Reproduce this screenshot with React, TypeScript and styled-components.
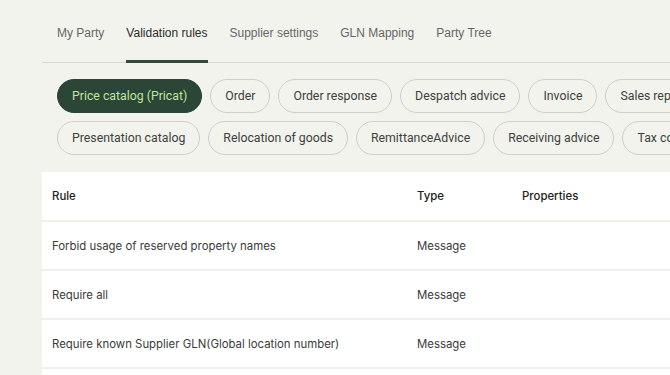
import styled, { createGlobalStyle } from "styled-components";

const GlobalStyle = createGlobalStyle`
  html, body {
    margin: 0;
    padding: 0;
    background: #f3f3ee;
    overflow: hidden;
  }
  body {
    font-family: Inter, "Liberation Sans", sans-serif;
    color: #333;
  }
`;

const Page = styled.div`
  width: 670px;
  height: 375px;
  padding-left: 42px;
  box-sizing: border-box;
  overflow: hidden;
`;

const TabBar = styled.nav`
  display: flex;
  gap: 22px;
  padding: 24px 0 0 15px;
  border-bottom: 1px solid #d9d9d4;
`;

const Tab = styled.a<{ $active?: boolean }>`
  font-family: "Liberation Sans", Arial, sans-serif;
  font-size: 12px;
  line-height: 18px;
  padding-bottom: 18px;
  margin-bottom: -1px;
  color: ${p => (p.$active ? "#2b2b2b" : "#666")};
  border-bottom: 3px solid ${p => (p.$active ? "#2f4a3b" : "transparent")};
  white-space: nowrap;
  cursor: pointer;
`;

const ChipArea = styled.div`
  display: flex;
  flex-direction: column;
  gap: 8px;
  padding: 16px 0 0 15px;
`;

const ChipRow = styled.div`
  display: flex;
  gap: 8px;
  flex-wrap: nowrap;
`;

const Chip = styled.button<{ $active?: boolean }>`
  flex: none;
  font-family: Roboto, "Liberation Sans", sans-serif;
  font-size: 12.3px;
  line-height: 18px;
  padding: 7px 14px;
  border-radius: 17px;
  border: 1px solid ${p => (p.$active ? "#2b4536" : "#cfcfca")};
  background: ${p => (p.$active ? "#2b4536" : "transparent")};
  color: ${p => (p.$active ? "#bfe69c" : "#3c413d")};
  white-space: nowrap;
  cursor: pointer;
`;

const Card = styled.div`
  margin-top: 17px;
  width: 720px;
  background: #fff;
`;

const Row = styled.div<{ $head?: boolean }>`
  display: grid;
  grid-template-columns: 365px 105px 1fr;
  align-items: center;
  padding-left: 10px;
  height: ${p => (p.$head ? "48px" : "47px")};
  border-top: ${p => (p.$head ? "none" : "2px solid #f0f0eb")};
  font-size: 11.4px;
  font-weight: ${p => (p.$head ? 500 : 400)};
  color: ${p => (p.$head ? "#222" : "#3a3a3a")};
`;

const Cell = styled.div`
  white-space: nowrap;
`;

const tabs = ["My Party", "Validation rules", "Supplier settings", "GLN Mapping", "Party Tree"];

const chipRows = [
  ["Price catalog (Pricat)", "Order", "Order response", "Despatch advice", "Invoice", "Sales report"],
  ["Presentation catalog", "Relocation of goods", "RemittanceAdvice", "Receiving advice", "Tax control"],
];

const rules = [
  { name: "Forbid usage of reserved property names", type: "Message" },
  { name: "Require all", type: "Message" },
  { name: "Require known Supplier GLN(Global location number)", type: "Message" },
  { name: "Require known Buyer GLN", type: "Message" },
];

const App = () => {
  return (
    <Page>
      <GlobalStyle />
      <TabBar>
        {tabs.map(t => (
          <Tab key={t} $active={t === "Validation rules"}>
            {t}
          </Tab>
        ))}
      </TabBar>
      <ChipArea>
        {chipRows.map((row, i) => (
          <ChipRow key={i}>
            {row.map(c => (
              <Chip key={c} $active={c === "Price catalog (Pricat)"}>
                {c}
              </Chip>
            ))}
          </ChipRow>
        ))}
      </ChipArea>
      <Card>
        <Row $head>
          <Cell>Rule</Cell>
          <Cell>Type</Cell>
          <Cell>Properties</Cell>
        </Row>
        {rules.map(r => (
          <Row key={r.name}>
            <Cell>{r.name}</Cell>
            <Cell>{r.type}</Cell>
            <Cell />
          </Row>
        ))}
      </Card>
    </Page>
  );
};

export default App;
